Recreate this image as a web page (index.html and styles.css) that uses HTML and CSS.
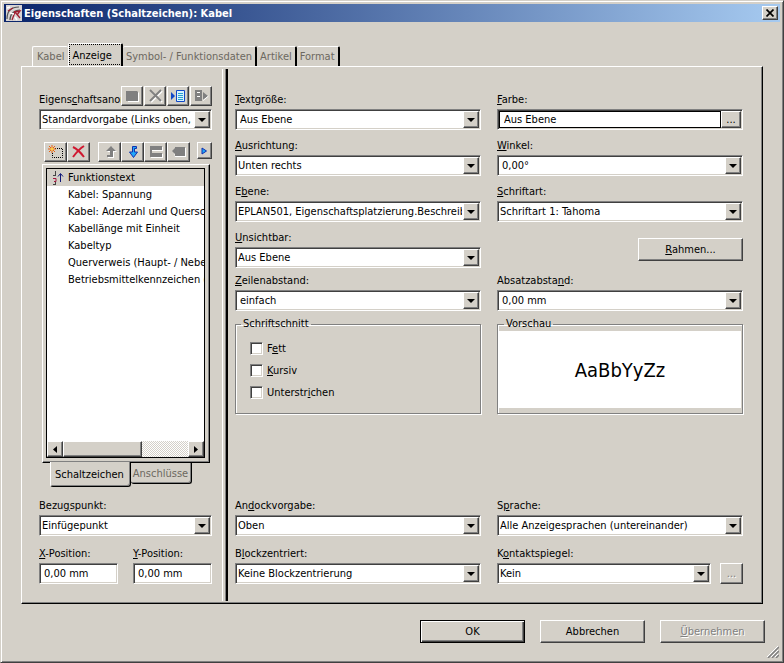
FILE: index.html
```html
<!DOCTYPE html>
<html lang="de">
<head>
  <meta charset="UTF-8" />
  <meta name="viewport" content="width=device-width, initial-scale=1" />
  <title>Eigenschaften (Schaltzeichen): Kabel</title>
  <link rel="stylesheet" href="styles.css">
</head>
<body>

  <div class="window">
    <header class="titlebar">
      <svg class="app-icon" width="16" height="16" viewBox="0 0 16 16">
        <path d="M0 0h16v16H0z" fill="#d8d4d4" />
        <path d="M1 14C1 6 5 2 13 2M4 15C4 9 8 5 14 5" fill="none" stroke="#555" stroke-width="1.2" />
        <path d="M2 6l5-3M6 15l3-8 5 6M8 7l6-1-3 4" fill="none" stroke="#a02030" stroke-width="1.3" />
        <path d="M4 8l4 1M9 12l2 3M1 3l3-1" stroke="#fff" stroke-width="1.5" />
      </svg>
      <h1>Eigenschaften (Schaltzeichen): Kabel</h1>
      <button class="close" aria-label="Schließen">
        <svg width="8" height="8" viewBox="0 0 8 8"><path d="M0.5 0.5l7 7M7.5 0.5l-7 7" stroke="#000" stroke-width="1.7" /></svg>
      </button>
    </header>

    <nav class="tabs">
      <button class="tab">Kabel</button>
      <button class="tab selected">Anzeige</button>
      <button class="tab">Symbol- / Funktionsdaten</button>
      <button class="tab">Artikel</button>
      <button class="tab">Format</button>
    </nav>

    <main class="panel">
      <!-- Linke Seite: Anordnung und Liste -->
      <section class="left">
        <div class="arrangement">
          <label for="anordnung">Eigens<u>c</u>haftsanor</label>
          <div class="tools">
            <button class="tool" aria-label="Speichern" disabled>
              <svg width="16" height="14" viewBox="0 0 16 14"><path d="M3 2h10l1 1v9H3z" fill="#fff" transform="translate(1 1)" /><path d="M2 2h11l1 1v9H2z" fill="#808080" /></svg>
            </button>
            <button class="tool" aria-label="Anordnung löschen" disabled>
              <svg width="16" height="14" viewBox="0 0 16 14"><path d="M4 2l11 11M15 2L4 13" stroke="#fff" stroke-width="2" /><path d="M3 1l11 11M14 1L3 12" stroke="#808080" stroke-width="2" /></svg>
            </button>
            <button class="tool" aria-label="Anordnung laden">
              <svg width="16" height="14" viewBox="0 0 16 14"><path d="M1 3l4 4-4 4z" fill="#1048c8" /><path d="M6.500 1.500h8v11h-8z" fill="#d8f4ff" stroke="#1048c8" /><path d="M8 4.500h5M8 6.500h5M8 8.500h5M8 10.500h5" stroke="#28a0d0" /></svg>
            </button>
            <button class="tool" aria-label="Anordnung übertragen" disabled>
              <svg width="16" height="14" viewBox="0 0 16 14"><path d="M2 1h7v11H2z" fill="#808080" /><path d="M4 3.500h3M4 7.500h3" stroke="#fff" /><path d="M10 3l5 4-5 4z" fill="#808080" /><path d="M10 11.500L15.500 7" stroke="#fff" /></svg>
            </button>
          </div>
        </div>
        <div class="combo">
          <select id="anordnung"><option>Standardvorgabe (Links oben, (</option></select>
          <span class="arrow"></span>
        </div>

        <div class="toolbar">
          <button class="tool" aria-label="Neu">
            <svg width="16" height="14" viewBox="0 0 16 14"><path d="M7 3.500h7.500v9h-10V8" fill="none" stroke="#000" stroke-dasharray="1 1" /><path d="M4 0v8M0 4h8M1 1l6 6M7 1L1 7" stroke="#e86010" /><circle cx="4" cy="4" r="1.500" fill="#ffd040" /></svg>
          </button>
          <button class="tool" aria-label="Löschen">
            <svg width="16" height="14" viewBox="0 0 16 14"><path d="M2 2c4 2 8 6 11 10M13 1C8 4 5 8 2 12" fill="none" stroke="#d01830" stroke-width="2" /></svg>
          </button>
          <span class="spacer"></span>
          <button class="tool" aria-label="Nach oben" disabled>
            <svg width="16" height="14" viewBox="0 0 16 14"><path d="M10 2l5 5h-3v6H6v-1h3V7H5z" fill="#fff" /><path d="M9 1l5 5h-3v6H5v-2h3V6H4z" fill="#808080" /></svg>
          </button>
          <button class="tool" aria-label="Nach unten">
            <svg width="16" height="14" viewBox="0 0 16 14"><path d="M11.500 1.500H7.500V7H4.500L8.500 12.500 12.500 7h-3V3.500h2z" fill="#20a8f8" stroke="#1030b0" /></svg>
          </button>
          <button class="tool" aria-label="Verbinden" disabled>
            <svg width="16" height="14" viewBox="0 0 16 14"><path d="M3 2h12v4H3zM3 9h12v4H3z" fill="#fff" /><path d="M2 1h12v4H2zM2 8h12v4H2zM2 5h2v3H2z" fill="#808080" /></svg>
          </button>
          <button class="tool" aria-label="Lösen" disabled>
            <svg width="16" height="14" viewBox="0 0 16 14"><path d="M3 7l2-4h10v9H4z" fill="#fff" /><path d="M1 6l3-3V2h10v9H4V9z" fill="#808080" /></svg>
          </button>
          <button class="more" aria-label="Weitere">
            <svg width="7" height="8" viewBox="0 0 7 8"><path d="M1 1l4.500 3L1 7z" fill="#20a8f8" stroke="#1030b0" /></svg>
          </button>
        </div>

        <div class="list-frame">
          <div class="list-box">
            <ul class="list">
              <li class="current">
                <svg width="12" height="14" viewBox="0 0 12 14"><path d="M3.500 0v4M1 4.500h3M3.500 10v4M1 13.500h3" fill="none" stroke="#444" /><path d="M1 7.500h3v3H2" fill="none" stroke="#a01840" /><path d="M8.500 11V3M6 5.500l2.500-3 2.500 3" fill="none" stroke="#101878" /></svg>
                Funktionstext
              </li>
              <li>Kabel: Spannung</li>
              <li>Kabel: Aderzahl und Quersch</li>
              <li>Kabellänge mit Einheit</li>
              <li>Kabeltyp</li>
              <li>Querverweis (Haupt- / Nebe</li>
              <li>Betriebsmittelkennzeichen (s</li>
            </ul>
            <div class="scrollbar">
              <button class="scroll-btn" aria-label="Nach links"><svg width="4" height="7" viewBox="0 0 4 7"><path d="M4 0v7L0 3.500z" /></svg></button>
              <div class="thumb"></div>
              <button class="scroll-btn end" aria-label="Nach rechts"><svg width="4" height="7" viewBox="0 0 4 7"><path d="M0 0v7l4-3.500z" /></svg></button>
            </div>
          </div>
        </div>
        <div class="bottom-tabs">
          <button class="bottom-tab selected">Schaltzeichen</button>
          <button class="bottom-tab">Anschlüsse</button>
        </div>

        <div class="field">
          <label for="bezugspunkt">Bezu<u>g</u>spunkt:</label>
          <div class="combo">
            <select id="bezugspunkt"><option>Einfügepunkt</option></select>
            <span class="arrow"></span>
          </div>
        </div>
        <div class="position">
          <div class="field">
            <label for="xpos"><u>X</u>-Position:</label>
            <input type="text" id="xpos" value="0,00 mm" />
          </div>
          <div class="field">
            <label for="ypos"><u>Y</u>-Position:</label>
            <input type="text" id="ypos" value="0,00 mm" />
          </div>
        </div>
      </section>

      <div class="splitter"></div>

      <!-- Rechte Seite: Textformat -->
      <section class="right">
        <div class="fields">
          <div class="field">
            <label for="textgroesse"><u>T</u>extgröße:</label>
            <div class="combo indent">
              <select id="textgroesse"><option>Aus Ebene</option></select>
              <span class="arrow"></span>
            </div>
          </div>
          <div class="field">
            <label for="farbe"><u>F</u>arbe:</label>
            <div class="color-box">
              <input type="text" id="farbe" value="Aus Ebene" />
              <button class="dots" aria-label="Farbe wählen">...</button>
            </div>
          </div>
          <div class="field">
            <label for="ausrichtung"><u>A</u>usrichtung:</label>
            <div class="combo">
              <select id="ausrichtung"><option>Unten rechts</option></select>
              <span class="arrow"></span>
            </div>
          </div>
          <div class="field">
            <label for="winkel"><u>W</u>inkel:</label>
            <div class="combo indent">
              <select id="winkel"><option>0,00°</option></select>
              <span class="arrow"></span>
            </div>
          </div>
          <div class="field">
            <label for="ebene">E<u>b</u>ene:</label>
            <div class="combo">
              <select id="ebene"><option>EPLAN501, Eigenschaftsplatzierung.Beschreibe</option></select>
              <span class="arrow"></span>
            </div>
          </div>
          <div class="field">
            <label for="schriftart"><u>S</u>chriftart:</label>
            <div class="combo">
              <select id="schriftart"><option>Schriftart 1: Tahoma</option></select>
              <span class="arrow"></span>
            </div>
          </div>
          <div class="field">
            <label for="unsichtbar"><u>U</u>nsichtbar:</label>
            <div class="combo">
              <select id="unsichtbar"><option>Aus Ebene</option></select>
              <span class="arrow"></span>
            </div>
          </div>
          <button class="push frame-btn"><span><u>R</u>ahmen...</span></button>
        </div>

        <div class="fields spacing">
          <div class="field">
            <label for="zeilenabstand"><u>Z</u>eilenabstand:</label>
            <div class="combo indent">
              <select id="zeilenabstand"><option>einfach</option></select>
              <span class="arrow"></span>
            </div>
          </div>
          <div class="field">
            <label for="absatzabstand">Absatzabsta<u>n</u>d:</label>
            <div class="combo indent">
              <select id="absatzabstand"><option>0,00 mm</option></select>
              <span class="arrow"></span>
            </div>
          </div>
          <fieldset class="style-group">
            <legend>Schriftschnitt</legend>
            <label><input type="checkbox" /><span>F<u>e</u>tt</span></label>
            <label><input type="checkbox" /><span><u>K</u>ursiv</span></label>
            <label><input type="checkbox" /><span>Unterstr<u>i</u>chen</span></label>
          </fieldset>
          <fieldset class="preview-group">
            <legend>Vorschau</legend>
            <div class="preview">AaBbYyZz</div>
          </fieldset>
        </div>

        <div class="fields docking">
          <div class="field">
            <label for="andock">An<u>d</u>ockvorgabe:</label>
            <div class="combo">
              <select id="andock"><option>Oben</option></select>
              <span class="arrow"></span>
            </div>
          </div>
          <div class="field">
            <label for="sprache">S<u>p</u>rache:</label>
            <div class="combo">
              <select id="sprache"><option>Alle Anzeigesprachen (untereinander)</option></select>
              <span class="arrow"></span>
            </div>
          </div>
          <div class="field">
            <label for="block">B<u>l</u>ockzentriert:</label>
            <div class="combo">
              <select id="block"><option>Keine Blockzentrierung</option></select>
              <span class="arrow"></span>
            </div>
          </div>
          <div class="field">
            <label for="kontakt">K<u>o</u>ntaktspiegel:</label>
            <div class="with-button">
              <div class="combo">
                <select id="kontakt"><option>Kein</option></select>
                <span class="arrow"></span>
              </div>
              <button class="dots wide" aria-label="Kontaktspiegel wählen" disabled>...</button>
            </div>
          </div>
        </div>
      </section>
    </main>

    <footer class="actions">
      <button class="push default">OK</button>
      <button class="push">Abbrechen</button>
      <button class="push" disabled><span><u>Ü</u>bernehmen</span></button>
    </footer>
    <svg class="grip" width="12" height="12" viewBox="0 0 12 12">
      <path d="M0 11L11 0M4 11l7-7M8 11l3-3" stroke="#fff" />
      <path d="M1 12L12 1M5 12l7-7M9 12l3-3" stroke="#808080" stroke-width="1.500" />
    </svg>
  </div>

</body>
</html>
```
FILE: styles.css
```css
* {
  box-sizing: border-box;
}

body {
  margin: 0;
  background-color: #d4d0c8;
}

body,
button,
input,
select {
  font-family: Tahoma, "DejaVu Sans Condensed", "DejaVu Sans", sans-serif;
  font-size: 11px;
  color: #000;
}

button {
  display: flex;
  align-items: center;
  justify-content: center;
  padding: 0;
  background-color: #d4d0c8;
  border: 1px solid;
  border-color: #fff #404040 #404040 #fff;
  box-shadow: inset -1px -1px #808080;
}

button:disabled {
  color: #808080;
  text-shadow: 1px 1px #fff;
}

.window {
  position: relative;
  display: flex;
  flex-direction: column;
  min-height: 100vh;
  padding: 3px;
  border: 1px solid;
  border-color: #d4d0c8 #404040 #404040 #d4d0c8;
  box-shadow: inset 1px 1px #fff, inset -1px -1px #808080;
}

.titlebar {
  display: flex;
  align-items: center;
  height: 18px;
  padding: 0 2px;
  background: linear-gradient(to right, #0a246a, #a6caf0);
}

.titlebar h1 {
  flex: 1;
  margin: 0 0 0 2px;
  font-size: 11px;
  color: #fff;
}

.close {
  width: 16px;
  height: 14px;
}

/* Tabs */
.tabs {
  display: flex;
  align-items: flex-end;
  margin: 21px 28px 0;
}

.tab {
  height: 20px;
  padding: 0 3px;
  color: #6c6860;
  border-width: 1px 2px 0 0;
  border-color: #fff #000 #fff #fff;
  border-radius: 2px 2px 0 0;
  box-shadow: none;
}

.tab:first-child {
  padding: 0 4px;
  border-left-width: 1px;
  border-right-width: 0;
}

.tab.selected {
  height: 23px;
  padding: 0 9px 0 3px;
  color: #000;
  border-left-width: 1px;
  outline: 1px dotted #000;
  outline-offset: -2px;
}

.panel {
  flex: 1;
  display: flex;
  margin: 0 17px;
  border: 1px solid;
  border-color: #fff #000 #000 #fff;
  box-shadow: inset -1px -1px #808080;
}

.splitter {
  width: 6px;
  margin: 2px 0;
  border-left: 1px solid #fff;
  border-right: 2px solid #000;
  box-shadow: inset -1px 0 #808080;
}

/* Linke Seite */
.left {
  display: flex;
  flex-direction: column;
  flex: 0 0 200px;
  min-width: 0;
  padding: 19px 10px 19px 17px;
}

.arrangement {
  display: flex;
  align-items: center;
  height: 20px;
  margin-bottom: 3px;
}

.arrangement label {
  flex: 1;
  min-width: 0;
  overflow: hidden;
  white-space: nowrap;
  line-height: 16px;
  padding-top: 8px;
}

.tools,
.toolbar {
  display: flex;
}

.tools {
  gap: 1px;
}

.toolbar {
  margin: 12px 0 2px 5px;
}

.tool {
  width: 22px;
  height: 20px;
}

.toolbar .tool {
  width: 23px;
}

.spacer {
  width: 8px;
}

.more {
  width: 15px;
  height: 17px;
  margin-left: auto;
}

.list-frame {
  flex: 1;
  display: flex;
  min-height: 0;
  margin: 0 2px 0 3px;
  padding: 3px 4px 4px 3px;
  border: 1px solid;
  border-color: #fff #000 #000 #fff;
  box-shadow: inset -1px -1px #808080;
}

.list-box {
  flex: 1;
  display: flex;
  flex-direction: column;
  min-width: 0;
  background-color: #fff;
  border: 1px solid #000;
}

.list {
  flex: 1;
  margin: 0;
  padding: 0;
  list-style: none;
  overflow: hidden;
}

.list li {
  padding-left: 21px;
  line-height: 17px;
  white-space: nowrap;
}

.list .current {
  display: flex;
  align-items: center;
  gap: 4px;
  padding-left: 5px;
  background-color: #d4d0c8;
}

.scrollbar {
  display: flex;
  height: 16px;
  background: repeating-conic-gradient(#fff 0 25%, #d4d0c8 0 50%) 0 0 / 2px 2px;
}

.scroll-btn {
  width: 16px;
}

.scroll-btn.end {
  margin-left: auto;
}

.thumb {
  width: 50%;
  background-color: #d4d0c8;
  border: 1px solid;
  border-color: #fff #404040 #404040 #fff;
  box-shadow: inset -1px -1px #808080;
}

.bottom-tabs {
  display: flex;
  align-items: flex-start;
  margin: 0 0 12px 11px;
}

.bottom-tab {
  height: 21px;
  padding: 0 3px 0 2px;
  color: #6c6860;
  border-width: 0 1px 1px 0;
  border-color: #000;
  border-radius: 0 0 3px 3px;
}

.bottom-tab.selected {
  height: 25px;
  margin-top: -1px;
  padding: 0 6px 0 4px;
  color: #000;
  border-left: 1px solid #fff;
}

.position {
  display: grid;
  grid-template-columns: 1fr 1fr;
  gap: 15px;
  margin-top: 11px;
}

/* Felder */
.field {
  min-width: 0;
}

.field > label {
  display: block;
  height: 16px;
  line-height: 14px;
}

.combo,
.color-box,
.position input {
  height: 21px;
  background-color: #fff;
  border: 1px solid;
  border-color: #808080 #fff #fff #808080;
  box-shadow: inset 1px 1px #404040, inset -1px -1px #d4d0c8;
}

.position input {
  width: 100%;
  padding: 0 4px;
}

.combo {
  display: grid;
  min-width: 0;
}

.combo select {
  grid-area: 1 / 1;
  width: 100%;
  min-width: 0;
  height: 19px;
  padding: 0 18px 0 2px;
  appearance: none;
  background: none;
  border: 0;
  border-radius: 0;
}

.combo.indent select {
  padding-left: 4px;
}

.arrow {
  grid-area: 1 / 1;
  justify-self: end;
  display: flex;
  align-items: center;
  justify-content: center;
  width: 16px;
  margin: 1px;
  background-color: #d4d0c8;
  border: 1px solid;
  border-color: #fff #404040 #404040 #fff;
  box-shadow: inset -1px -1px #808080;
  pointer-events: none;
}

.arrow::after {
  content: "";
  border: 4px solid transparent;
  border-top-color: #000;
  border-bottom-width: 0;
}

.color-box {
  display: flex;
  padding: 1px;
  background-color: #d4d0c8;
}

.color-box input {
  flex: 1;
  min-width: 0;
  padding: 0 4px;
  border: 1px solid #000;
}

.dots {
  width: 20px;
}

.dots.wide {
  width: 23px;
}

.with-button {
  display: flex;
  gap: 9px;
}

.with-button .combo {
  flex: 1;
}

/* Rechte Seite */
.right {
  flex: 1;
  display: flex;
  flex-direction: column;
  min-width: 0;
  padding: 26px 19px 19px 7px;
}

.fields {
  display: grid;
  grid-template-columns: 1fr 1fr;
  gap: 9px 16px;
}

.fields.spacing {
  margin-top: 6px;
  row-gap: 6px;
}

.fields.docking {
  margin-top: auto;
  row-gap: 11px;
}

.push {
  width: 105px;
  height: 23px;
}

.frame-btn {
  align-self: center;
  justify-self: end;
}

fieldset {
  min-width: 0;
  height: 97px;
  margin: 0;
  border: 1px solid #808080;
  box-shadow: 1px 1px #fff, inset 1px 1px #fff;
}

legend {
  margin-left: 5px;
  padding: 0 2px;
  line-height: 14px;
}

.style-group {
  display: flex;
  flex-direction: column;
  gap: 8px;
  padding: 10px 0;
}

.style-group label {
  display: flex;
  align-items: center;
  gap: 4px;
  height: 14px;
  margin-left: 14px;
}

.style-group input {
  width: 13px;
  height: 13px;
  margin: 0;
  appearance: none;
  background-color: #fff;
  border: 1px solid;
  border-color: #808080 #fff #fff #808080;
  box-shadow: inset 1px 1px #404040, inset -1px -1px #d4d0c8;
}

.preview-group {
  padding: 0 1px 5px;
}

.preview {
  display: flex;
  align-items: center;
  justify-content: center;
  height: 100%;
  background-color: #fff;
  font-size: 20px;
}

/* Fusszeile */
.actions {
  display: flex;
  justify-content: flex-end;
  gap: 15px;
  padding: 16px 15px;
}

.push.default {
  border-color: #000;
  box-shadow: inset 1px 1px #fff, inset -1px -1px #404040, inset -2px -2px #808080;
}

.grip {
  position: absolute;
  right: 4px;
  bottom: 4px;
}
```
